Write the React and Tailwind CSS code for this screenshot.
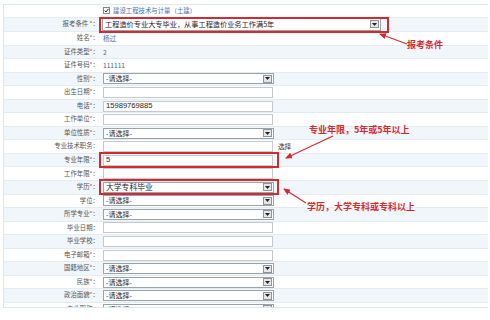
import React from "react";

const FONT = { fontFamily: '"Noto Sans CJK SC", "Liberation Sans", sans-serif' };

const rows = [
  { label: "姓名", req: true, type: "text", value: "杨过", color: "text-[#3f73ad]" },
  { label: "证件类型", req: true, type: "text", value: "2", color: "text-[#666]" },
  { label: "证件号码", req: true, type: "text", value: "111111", color: "text-[#2f5f99]" },
  { label: "性别", req: true, type: "select", value: "-请选择-" },
  { label: "出生日期", req: true, type: "input", value: "" },
  { label: "电话", req: true, type: "input", value: "15989769885" },
  { label: "工作单位", req: true, type: "input", value: "" },
  { label: "单位性质", req: true, type: "select", value: "-请选择-" },
  { label: "专业技术职务", req: false, type: "input", value: "", extra: "选择" },
  { label: "专业年限", req: true, type: "input", value: "5" },
  { label: "工作年限", req: true, type: "input", value: "" },
  { label: "学历", req: true, type: "select", value: "大学专科毕业", big: true },
  { label: "学位", req: false, type: "select", value: "-请选择-" },
  { label: "所学专业", req: true, type: "select", value: "-请选择-" },
  { label: "毕业日期", req: false, type: "input", value: "" },
  { label: "毕业学校", req: false, type: "input", value: "" },
  { label: "电子邮箱", req: true, type: "input", value: "" },
  { label: "国籍地区", req: true, type: "select", value: "-请选择-" },
  { label: "民族", req: true, type: "select", value: "-请选择-" },
  { label: "政治面貌", req: true, type: "select", value: "-请选择-" },
  { label: "专业职称", req: false, type: "select", value: "-请选择-" },
];

function DropButton() {
  return (
    <span className="flex h-[8px] w-[9px] items-center justify-center border border-[#8d949a] bg-[#e4e6e8]">
      <svg width="5" height="3" viewBox="0 0 5 3">
        <path d="M0 0 H5 L2.5 3 Z" fill="#222" />
      </svg>
    </span>
  );
}

function Select({ value, wide, big }) {
  return (
    <div
      className={
        "flex items-center justify-between border border-[#9aa2aa] bg-white pl-[2px] pr-[1px] text-[#222] " +
        (wide ? "h-[13px] w-[279px] text-[7.2px]" : "h-[11px] w-[171px] " + (big ? "text-[7.8px]" : "text-[7px]"))
      }
    >
      <span className="leading-none">{value}</span>
      <DropButton />
    </div>
  );
}

function Input({ value }) {
  return (
    <div className="flex h-[11px] w-[170px] items-center border border-[#c3c9ce] bg-white pl-[2px] text-[7.6px] leading-none text-[#222]" style={{ fontFamily: '"Liberation Sans", sans-serif' }}>
      {value}
    </div>
  );
}

function Label({ text, req }) {
  return (
    <div className="w-[96px] shrink-0 pr-[1px] text-right text-[6.4px] leading-none text-[#555]">
      {text}
      {req && <span className="text-[#e03030]">*</span>}：
    </div>
  );
}

export default function App() {
  return (
    <div className="relative h-[320px] w-[490px] overflow-hidden bg-white" style={FONT}>
      <div className="ml-[3px] mt-[4px] h-[304px] w-[485px] overflow-hidden border-b border-l border-t border-[#dfe7ee]">
        {/* checkbox row */}
        <div className="flex h-[12.5px] items-center border-b border-[#e4ebf1] bg-white">
          <div className="w-[96px] shrink-0" />
          <div className="flex items-center gap-[3px] pl-[3px]">
            <span className="flex h-[7px] w-[7px] items-center justify-center border border-[#7d8790] bg-white">
              <svg width="5" height="5" viewBox="0 0 5 5">
                <path d="M0.6 2.6 L2 4 L4.5 0.8" stroke="#222" strokeWidth="1" fill="none" />
              </svg>
            </span>
            <span className="text-[6.4px] leading-none text-[#3f73ad]">建设工程技术与计量（土建）</span>
          </div>
        </div>

        {/* 报考条件 */}
        <div className="flex h-[14.5px] items-center border-b border-[#e4ebf1] bg-[#f1f6fa]">
          <Label text="报考条件 " req />
          <div className="pl-[2px]">
            <Select wide value="工程造价专业大专毕业，从事工程造价业务工作满5年" />
          </div>
        </div>

        {rows.map((r, i) => (
          <div
            key={r.label}
            className={
              "flex h-[13.56px] items-center border-b border-[#e4ebf1] " +
              (i % 2 === 0 ? "bg-white" : "bg-[#f1f6fa]")
            }
          >
            <Label text={r.label} req={r.req} />
            <div className="flex items-center gap-[5px] pl-[3px]">
              {r.type === "text" && (
                <span className={"text-[6.6px] leading-none " + r.color}>{r.value}</span>
              )}
              {r.type === "select" && <Select value={r.value} big={r.big} />}
              {r.type === "input" && <Input value={r.value} />}
              {r.extra && <span className="text-[6.6px] leading-none text-[#333]">{r.extra}</span>}
            </div>
          </div>
        ))}
      </div>

      {/* annotation boxes */}
      <div className="absolute left-[99px] top-[17px] h-[16px] w-[290px] border-2 border-[#d42a2f]" />
      <div className="absolute left-[99px] top-[152px] h-[16px] w-[180px] border-2 border-[#d42a2f]" />
      <div className="absolute left-[99px] top-[179px] h-[16px] w-[180px] border-2 border-[#d42a2f]" />

      {/* annotation arrows */}
      <svg className="pointer-events-none absolute left-0 top-0" width="490" height="320">
        <defs>
          <marker id="ah" markerWidth="7" markerHeight="6" refX="6" refY="3" orient="auto" markerUnits="userSpaceOnUse">
            <path d="M0 0 L7 3 L0 6 Z" fill="#d42a2f" />
          </marker>
        </defs>
        <line x1="407" y1="44" x2="380" y2="34" stroke="#d42a2f" strokeWidth="1.2" markerEnd="url(#ah)" />
        <line x1="333" y1="136" x2="286" y2="158" stroke="#d42a2f" strokeWidth="1.2" markerEnd="url(#ah)" />
        <line x1="306" y1="203" x2="284" y2="189" stroke="#d42a2f" strokeWidth="1.2" markerEnd="url(#ah)" />
      </svg>

      {/* annotation labels */}
      <div className="absolute left-[407px] top-[39px] text-[9px] font-bold leading-[12px] text-[#d42a2f]">报考条件</div>
      <div className="absolute left-[309px] top-[124px] text-[9px] font-bold leading-[12px] text-[#d42a2f]">专业年限，5年或5年以上</div>
      <div className="absolute left-[307px] top-[201px] text-[9px] font-bold leading-[12px] text-[#d42a2f]">学历，大学专科或专科以上</div>
    </div>
  );
}
